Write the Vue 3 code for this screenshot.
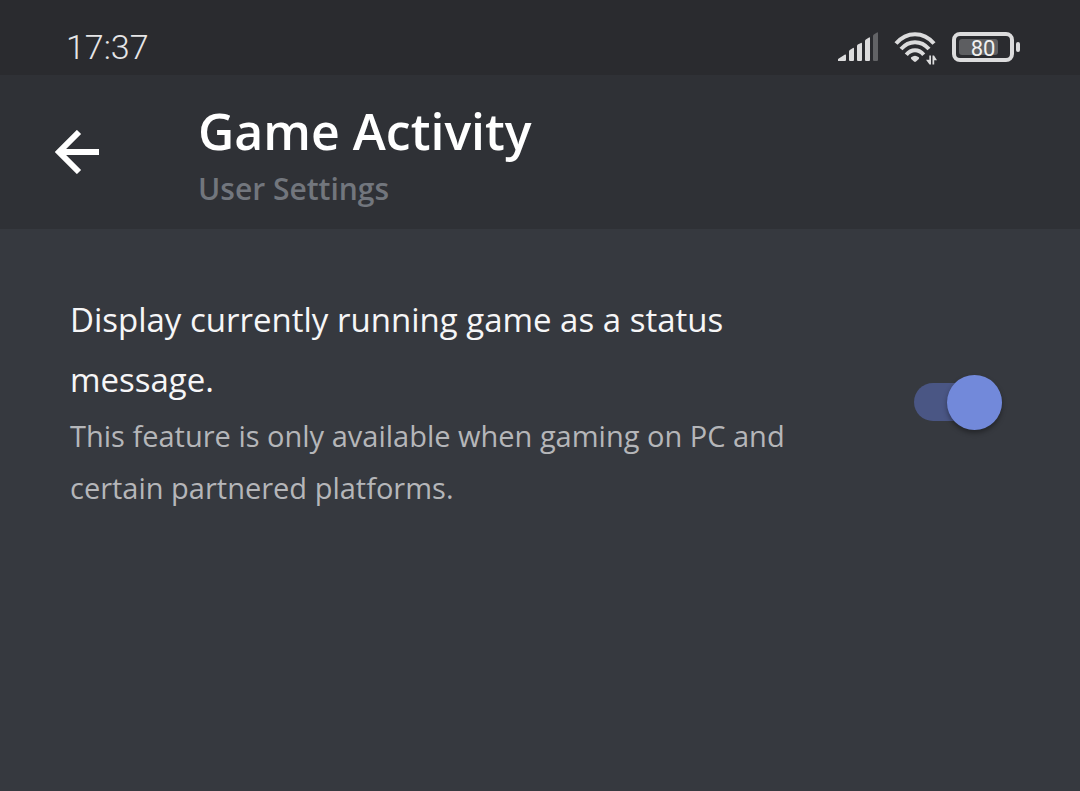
<script setup>
import { ref } from 'vue'

const showGame = ref(true)
</script>

<template>
  <div class="screen">
    <div class="status-bar">
      <time class="clock">17:37</time>
      <div class="indicators">
        <svg class="signal" viewBox="0 0 40 30" aria-hidden="true">
          <path d="M0 29v-2l7-4.500q1-.5 1 1V28q0 1-1 1zM11 28V19.500q0-1 .8-1.500L15 16q1-.5 1 .8V28q0 1-1 1h-3q-1 0-1-1zM19 28V14q0-1 .8-1.500L23 11q1-.5 1 .8V28q0 1-1 1h-3q-1 0-1-1zM27 28V9q0-1 .8-1.500L31 5.400q1-.5 1 .8V28q0 1-1 1h-3q-1 0-1-1z" />
          <path class="dim" d="M35 28V4q0-1 .8-1.500L39 .4q1-.5 1 .8V28q0 1-1 1h-3q-1 0-1-1z" />
        </svg>
        <svg class="wifi" viewBox="-2 -3 44 36" aria-hidden="true">
          <g class="arcs">
            <path d="M1 11.500Q9 2.200 20 2.200t19 9.300" />
            <path d="M6 17Q12 10.200 20 10.200t14 6.800" />
            <path d="M11.300 22.700Q15 18.200 20 18.200t8.700 4.500" />
          </g>
          <path d="M16.200 25.300Q20 22.300 23.800 25.300q.7.800 0 1.600l-2.800 2.700q-1 .9-2 0l-2.800-2.700q-.7-.8 0-1.600z" />
          <path d="M34.300 23.500H36v9h-1.500L31 27.800h3.300zM37.500 32.500v-9H39l3 4.700h-2.800v4.300z" />
        </svg>
        <svg class="battery" viewBox="0 0 68 30" role="img" aria-label="Battery 80 percent">
          <rect class="shell" x="2" y="2" width="58" height="26" rx="6" />
          <rect class="charge" x="7" y="7" width="39" height="16" rx="3" />
          <rect x="64" y="10" width="4" height="10" rx="2" />
          <text x="31" y="24" text-anchor="middle">80</text>
        </svg>
      </div>
    </div>

    <header class="toolbar">
      <button class="back" type="button" aria-label="Back">
        <svg viewBox="0 0 44 44" aria-hidden="true">
          <path d="M44 22H4M24 2L4 22L24 42" />
        </svg>
      </button>
      <div class="heading">
        <h1>Game Activity</h1>
        <p>User Settings</p>
      </div>
    </header>

    <main>
      <div class="setting">
        <div class="copy">
          <label for="show-game">Display currently running game as a status message.</label>
          <p id="show-game-note">This feature is only available when gaming on PC and certain partnered platforms.</p>
        </div>
        <input id="show-game" v-model="showGame" class="switch" type="checkbox" role="switch" aria-describedby="show-game-note" />
      </div>
    </main>
  </div>
</template>

<style>
body {
  background: #36393f;
}
</style>

<style scoped>
.screen {
  min-height: 100vh;
  background: #36393f;
  color: #fff;
  font-family: "Open Sans", "Noto Sans", sans-serif;
}

.status-bar {
  display: flex;
  align-items: center;
  justify-content: space-between;
  box-sizing: border-box;
  min-height: 75px;
  padding: 19px 60px 0 66px;
  background: #2a2b2f;
}

.clock {
  color: #e6e6e7;
  font: 300 34px/42px Roboto, sans-serif;
}

.indicators {
  display: flex;
  align-items: center;
  gap: 15px;
  fill: #dcdcdd;
}

.signal {
  width: 40px;
  height: 30px;
}

.dim {
  fill: #626366;
}

.wifi {
  width: 44px;
  height: 36px;
}

.arcs {
  fill: none;
  stroke: #dcdcdd;
  stroke-width: 4;
}

.battery {
  width: 68px;
  height: 30px;
}

.shell {
  fill: none;
  stroke: #dcdcdd;
  stroke-width: 4;
}

.charge {
  fill: #5d5e61;
}

.battery text {
  fill: #f0f0f0;
  font: 400 22px Roboto, sans-serif;
}

.toolbar {
  display: flex;
  align-items: center;
  gap: 99px;
  box-sizing: border-box;
  min-height: 154px;
  padding: 16px 55px;
  background: #2f3136;
}

.back {
  display: flex;
  flex: none;
  padding: 0;
  border: 0;
  background: none;
  cursor: pointer;
}

.back svg {
  width: 44px;
  height: 44px;
  fill: none;
  stroke: #fff;
  stroke-width: 6;
}

h1,
p {
  margin: 0;
}

h1 {
  font-size: 50px;
  font-weight: 600;
  line-height: 74px;
}

.heading p {
  color: #72767d;
  font-size: 30px;
  font-weight: 600;
  line-height: 42px;
}

.setting {
  display: flex;
  align-items: center;
  justify-content: space-between;
  gap: 64px;
  padding: 61px 78px 0 70px;
}

.copy {
  flex: 1;
}

.copy label {
  display: block;
  color: #f6f6f7;
  font-size: 33px;
  font-weight: 400;
  line-height: 60px;
}

.copy p {
  color: #b5b6b9;
  font-size: 29px;
  line-height: 52px;
}

.switch {
  position: relative;
  flex: none;
  width: 88px;
  height: 38px;
  margin: 0;
  border-radius: 19px;
  background: #4a5684;
  appearance: none;
  cursor: pointer;
}

.switch:not(:checked) {
  background: #72767d;
}

.switch::before {
  content: "";
  position: absolute;
  top: -8px;
  left: 0;
  width: 55px;
  height: 55px;
  border-radius: 50%;
  background: #b9bbbe;
  box-shadow: 0 3px 5px rgb(0 0 0 / 35%);
}

.switch:checked::before {
  right: 0;
  left: auto;
  background: #7289da;
}
</style>
